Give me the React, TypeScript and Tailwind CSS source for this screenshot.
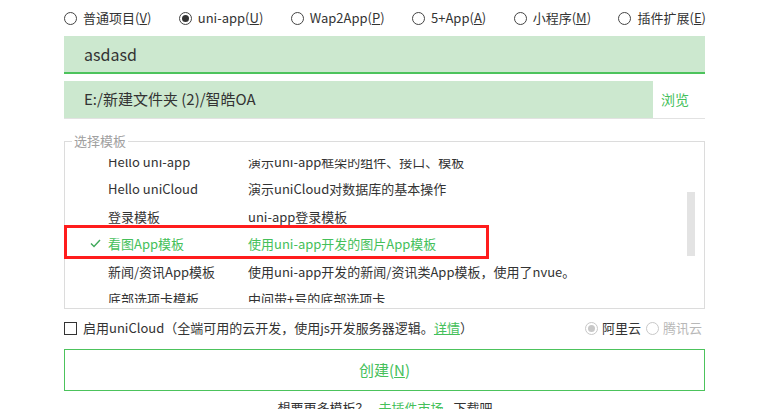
import React from "react";

const font = { fontFamily: '"Noto Sans CJK SC", "Noto Sans", sans-serif' };

const kinds = [
  { label: "普通项目", key: "V" },
  { label: "uni-app", key: "U", checked: true },
  { label: "Wap2App", key: "P" },
  { label: "5+App", key: "A" },
  { label: "小程序", key: "M" },
  { label: "插件扩展", key: "E" },
];

const templates = [
  { name: "默认模板", desc: "仅简单的展示一个页面" },
  { name: "Hello uni-app", desc: "演示uni-app框架的组件、接口、模板" },
  { name: "Hello uniCloud", desc: "演示uniCloud对数据库的基本操作" },
  { name: "登录模板", desc: "uni-app登录模板" },
  { name: "看图App模板", desc: "使用uni-app开发的图片App模板", selected: true },
  { name: "新闻/资讯App模板", desc: "使用uni-app开发的新闻/资讯类App模板，使用了nvue。" },
  { name: "底部选项卡模板", desc: "中间带+号的底部选项卡" },
  { name: "uView UI", desc: "多平台快速开发的UI框架" },
];

function Radio({ checked, disabled }: { checked?: boolean; disabled?: boolean }) {
  return (
    <span
      className={`flex h-[13px] w-[13px] shrink-0 items-center justify-center rounded-full border ${
        disabled ? "border-[#c8c8c8]" : "border-[#444]"
      }`}
    >
      {checked && (
        <span className={`h-[7px] w-[7px] rounded-full ${disabled ? "bg-[#c8c8c8]" : "bg-[#333]"}`} />
      )}
    </span>
  );
}

export default function App() {
  return (
    <div style={font} className="relative h-[409px] w-[759px] overflow-hidden bg-white text-[#333]">
      <div className="ml-[64px] w-[642px] pt-[9px]">
        <div className="flex h-[18px] items-center justify-between text-[13px] leading-[18px]">
          {kinds.map((k) => (
            <label key={k.key} className="flex items-center gap-[6px]">
              <Radio checked={k.checked} />
              <span>
                {k.label}(<span className="underline">{k.key}</span>)
              </span>
            </label>
          ))}
        </div>

        <div className="mt-[9px] flex h-[38px] w-[641px] items-center border-b-2 border-[#4cc35c] bg-[#cce8cf] pl-[20px] text-[16px]">
          asdasd
        </div>

        <div className="mt-[7px] flex h-[38px] w-[641px] border-b border-[#e2e2e2]">
          <div className="flex flex-1 items-center bg-[#cce8cf] pl-[20px] text-[15px]">E:/新建文件夹 (2)/智皓OA</div>
          <div className="flex w-[52px] items-center pl-[8px] text-[14px] text-[#45c05a]">浏览</div>
        </div>

        <fieldset className="mt-[13px] w-[641px] border border-[#dcdcdc] px-0 pb-[5px]">
          <legend className="ml-[7px] px-[2px] text-[13px] leading-[18px] text-[#a0a0a0]">选择模板</legend>
          <div className="relative mt-[9px] h-[144px] overflow-hidden text-[13px]">
            <div className="mt-[-39px]">
              {templates.map((t) => (
                <div
                  key={t.name}
                  className={`flex h-[27.5px] items-center ${t.selected ? "text-[#45c05a]" : ""}`}
                >
                  <span className="flex w-[43px] justify-end pr-[7px]">
                    {t.selected && (
                      <svg width="11" height="9" viewBox="0 0 11 9" fill="none">
                        <path d="M1 4.5 L4 7.5 L10 1" stroke="#3fa85a" strokeWidth="1.4" />
                      </svg>
                    )}
                  </span>
                  <span className="w-[140px] whitespace-nowrap">{t.name}</span>
                  <span className="whitespace-nowrap">{t.desc}</span>
                </div>
              ))}
            </div>
            <div className="absolute right-[9px] top-[33px] h-[64px] w-[8px] bg-[#e3e3e3]" />
          </div>
        </fieldset>

        <div className="mt-[10px] flex h-[18px] items-center text-[13px] leading-[18px]">
          <span className="h-[13px] w-[13px] shrink-0 border border-[#333]" />
          <span className="ml-[6px] whitespace-nowrap">
            启用uniCloud（全端可用的云开发，使用js开发服务器逻辑。
            <span className="text-[#45c05a] underline">详情</span>）
          </span>
          <div className="ml-auto flex items-center gap-[4px] pr-[4px]">
            <Radio checked disabled />
            <span className="mr-[1px]">阿里云</span>
            <Radio disabled />
            <span className="text-[#b8b8b8]">腾讯云</span>
          </div>
        </div>

        <button
          type="button"
          className="mt-[12px] flex h-[42px] w-[641px] items-center justify-center border border-[#4cc35c] text-[15px] text-[#45c05a]"
        >
          创建(<span className="underline">N</span>)
        </button>

        <div className="mt-[7px] flex justify-center gap-[10px] text-[13px]">
          <span>想要更多模板？</span>
          <span className="text-[#45c05a] underline">去插件市场</span>
          <span>下载吧</span>
        </div>
      </div>

      <div className="pointer-events-none absolute left-[64px] top-[225px] h-[34px] w-[425px] border-[3px] border-[#ff1c1c]" />
    </div>
  );
}
